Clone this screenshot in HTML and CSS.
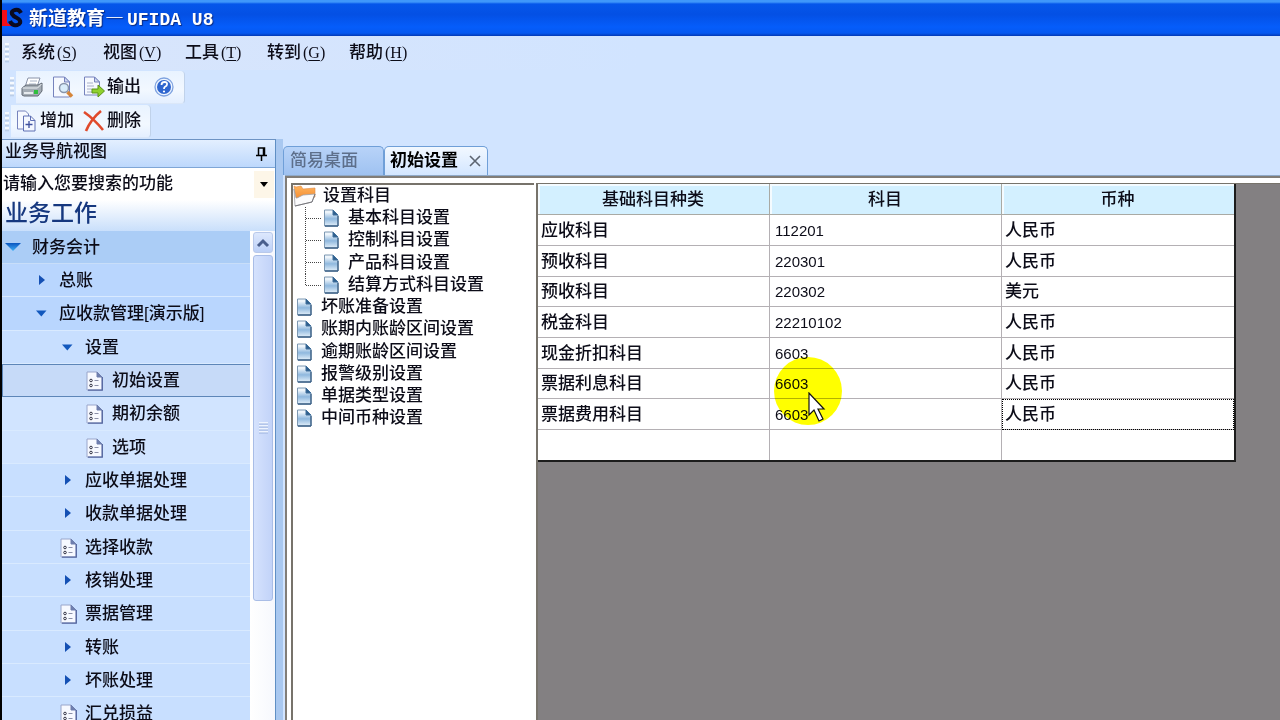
FILE: index.html
```
<!DOCTYPE html>
<html lang="zh-CN">
<head>
<meta charset="utf-8">
<title>新道教育—UFIDA U8</title>
<link rel="stylesheet" href="styles.css">
</head>
<body>
<svg class="defs" width="0" height="0" aria-hidden="true">
  <defs>
    <linearGradient id="g-page" x1="0" y1="0" x2="0" y2="1"><stop offset="0.15" stop-color="#eef5fb"/><stop offset="0.55" stop-color="#8fb8de"/><stop offset="1" stop-color="#e4f0fa"/></linearGradient>
    <linearGradient id="g-fold" x1="0" y1="0" x2="0" y2="1"><stop offset="0" stop-color="#ffb45c"/><stop offset="1" stop-color="#ef7f25"/></linearGradient>
    <linearGradient id="g-tri" x1="0" y1="0" x2="0" y2="1"><stop offset="0" stop-color="#0a55c0"/><stop offset="1" stop-color="#3fb0f5"/></linearGradient>
    <symbol id="page" viewBox="0 0 16 18">
      <path d="M1.500 1h8.500l5 5v11H1.500z" fill="url(#g-page)" stroke="#7d98b2"/>
      <path d="M10 1v5h5z" fill="#2f5f8c" stroke="#3f6f9c"/>
      <path d="M2 17h13M15 7v10" fill="none" stroke="#3c6187" stroke-width="1.300"/>
    </symbol>
    <symbol id="form" viewBox="0 0 17 20">
      <path d="M1 1h10l5 5v13H1z" fill="#f7f9ff" stroke="#9aa6cb"/>
      <path d="M11 1v5h5z" fill="#6f7fae" stroke="#6f7fae"/>
      <path d="M2 19.200h14.300V6" fill="none" stroke="#5567a0" stroke-width="1.300"/>
      <circle cx="5" cy="9.500" r="1.300" fill="none" stroke="#334"/><circle cx="5" cy="14.500" r="1.300" fill="none" stroke="#334"/>
      <path d="M8.500 9.500h4M8.500 14.500h4" stroke="#8a8fa8"/>
    </symbol>
    <symbol id="folder" viewBox="0 0 24 22">
      <path d="M1 1l2 1 5-1 2 3 12-1v9L3 18z" fill="url(#g-fold)" stroke="#e08a45" stroke-width="0.600"/>
      <path d="M4 13l6-3 12-1-3 8L2 21 1 4l2 9z" fill="#fbfbfc" stroke="#a0a0a4" stroke-width="0.800"/>
      <path d="M2 21l17-4 3-8" fill="none" stroke="#77777c"/>
    </symbol>
    <symbol id="branch" viewBox="0 0 18 23">
      <path d="M0.500 0v23M1 11.500h16" fill="none" stroke="#444" stroke-dasharray="1 1"/>
    </symbol>
    <symbol id="branch-end" viewBox="0 0 18 23">
      <path d="M0.500 0v11M1 11.500h16" fill="none" stroke="#444" stroke-dasharray="1 1"/>
    </symbol>
    <symbol id="right" viewBox="0 0 14 14"><path d="M5 1l6 5-6 5z" fill="#1450b4"/></symbol>
    <symbol id="down" viewBox="0 0 14 14"><path d="M2 3.500h10.500l-5.200 6z" fill="#1258bd"/></symbol>
  </defs>
</svg>

<header class="titlebar">
  <svg class="logo" width="22" height="22" viewBox="0 0 22 22" aria-hidden="true">
    <path d="M0 3h5v11q0 4 6 3v2H0z" fill="#f20d18"/>
    <path d="M19 6q-2-4-6-3-4 1-3 4 1 2 5 4 4 2 3 5-2 3-6 2-3-1-4-4" fill="none" stroke="#0a0a20" stroke-width="4"/>
  </svg>
  <h1>新道教育—<span class="mono">UFIDA U8</span></h1>
</header>

<nav class="menubar" aria-label="菜单">
  <i class="grip"></i>
  <button type="button">系统<span class="key">(<u>S</u>)</span></button>
  <button type="button">视图<span class="key">(<u>V</u>)</span></button>
  <button type="button">工具<span class="key">(<u>T</u>)</span></button>
  <button type="button">转到<span class="key">(<u>G</u>)</span></button>
  <button type="button">帮助<span class="key">(<u>H</u>)</span></button>
</nav>

<div class="toolbar main-tools">
  <i class="grip"></i>
  <div class="tools">
    <button type="button" aria-label="打印"><svg width="22" height="22" viewBox="0 0 22 22">
      <path d="M7 2h12l-3 9H4z" fill="#fff" stroke="#8a93a8"/><path d="M9 5h7M8 8h7" stroke="#a9b4c8"/>
      <path d="M1 12l4-3h12l4-2v8l-4 5H3l-2-1z" fill="#a4acb4" stroke="#626a75"/><path d="M1.500 12h15l4-4" fill="none" stroke="#eef2f5"/>
      <path d="M3 16h9v2H3z" fill="#e7ebee"/><path d="M13 14h4v4h-4z" fill="#2fbf3d"/></svg></button>
    <button type="button" aria-label="预览"><svg width="22" height="22" viewBox="0 0 22 22">
      <path d="M1.500 1h11l5 5v15h-16z" fill="#f6f9ff" stroke="#7683bd"/><path d="M12.500 1v5h5z" fill="#cfd8f0" stroke="#7683bd"/>
      <circle cx="12" cy="12" r="4.500" fill="#d9edfb" stroke="#8996ac" stroke-width="1.500"/><path d="M15.500 16l4.500 4.500" stroke="#d5853a" stroke-width="3.500"/></svg></button>
    <button type="button"><svg width="22" height="22" viewBox="0 0 22 22">
      <path d="M1.500 1h10l5 5v13h-15z" fill="#f6f9ff" stroke="#7683bd"/><path d="M11.500 1v5h5z" fill="#cfd8f0" stroke="#7683bd"/><path d="M4 7h6M4 10h7M4 13h5M4 16h5" stroke="#a8b0c8"/>
      <path d="M9 13h6V9l6.500 6-6.500 6v-4H9z" fill="#8fd12e" stroke="#5a9317"/></svg>输出</button>
    <button type="button" class="help" aria-label="帮助"><svg width="22" height="22" viewBox="0 0 22 22">
      <circle cx="11" cy="11" r="9" fill="#eef5ff" stroke="#7fa3e0" stroke-width="1.300"/><circle cx="11" cy="11" r="7" fill="#2f66cf"/>
      <path d="M8.500 9q0-3 3-3t2.500 2.500q0 1.300-2 2.300-1 .6-1 2.200" fill="none" stroke="#fff" stroke-width="1.800"/><circle cx="11" cy="15.500" r="1.100" fill="#fff"/></svg></button>
  </div>
</div>

<div class="toolbar edit-tools">
  <i class="grip"></i>
  <div class="tools">
    <button type="button"><svg width="22" height="22" viewBox="0 0 22 22">
      <path d="M1.500 1h8l3 3v15h-11z" fill="#f6f9ff" stroke="#7683bd"/><path d="M7.500 6h7l4.500 4.500V21H7.500z" fill="#f3f7ff" stroke="#5f70b4"/><path d="M14.500 6v4.500H19" fill="none" stroke="#5f70b4"/><path d="M13 11v7M9.500 14.500h7" stroke="#3d4f9e" stroke-width="1.300"/></svg>增加</button>
    <button type="button"><svg width="22" height="22" viewBox="0 0 22 22"><path d="M1 2Q11 9 20 20M18 1Q8 9 3 21" fill="none" stroke="#e04a2c" stroke-width="2.600"/></svg>删除</button>
  </div>
</div>

<main class="body">
  <aside class="sidebar">
    <div class="side-head"><h2>业务导航视图</h2>
      <button type="button" aria-label="固定"><svg width="14" height="16" viewBox="0 0 14 16"><path d="M3.500 9V2h6v7M8.500 2v7M1 9.500h11M6.500 10v5" fill="none" stroke="#000" stroke-width="1.500"/></svg></button>
    </div>
    <div class="search">
      <input type="text" aria-label="搜索功能" value="请输入您要搜索的功能">
      <button type="button" aria-label="展开"><svg width="8" height="5" viewBox="0 0 8 5"><path d="M0 0h8L4 5z"/></svg></button>
    </div>
    <h2 class="side-title">业务工作</h2>
    <div class="side-body">
      <ul class="nav">
        <li class="root"><svg width="18" height="18" viewBox="0 0 18 18"><path d="M1 4h16l-8 8z" fill="url(#g-tri)"/></svg>财务会计</li>
        <li class="l1 deep"><svg width="14" height="14"><use href="#right"/></svg>总账</li>
        <li class="l1 deep"><svg width="14" height="14"><use href="#down"/></svg>应收款管理[演示版]</li>
        <li class="l2"><svg width="14" height="14"><use href="#down"/></svg>设置</li>
        <li class="l3 active"><svg width="17" height="20"><use href="#form"/></svg>初始设置</li>
        <li class="l3"><svg width="17" height="20"><use href="#form"/></svg>期初余额</li>
        <li class="l3"><svg width="17" height="20"><use href="#form"/></svg>选项</li>
        <li class="l2"><svg width="14" height="14"><use href="#right"/></svg>应收单据处理</li>
        <li class="l2"><svg width="14" height="14"><use href="#right"/></svg>收款单据处理</li>
        <li class="l2"><svg width="17" height="20"><use href="#form"/></svg>选择收款</li>
        <li class="l2"><svg width="14" height="14"><use href="#right"/></svg>核销处理</li>
        <li class="l2"><svg width="17" height="20"><use href="#form"/></svg>票据管理</li>
        <li class="l2"><svg width="14" height="14"><use href="#right"/></svg>转账</li>
        <li class="l2"><svg width="14" height="14"><use href="#right"/></svg>坏账处理</li>
        <li class="l2"><svg width="17" height="20"><use href="#form"/></svg>汇兑损益</li>
      </ul>
      <div class="scroll">
        <button type="button" class="up" aria-label="向上滚动"><svg width="14" height="10" viewBox="0 0 14 10"><path d="M2 8l5-5 5 5" fill="none" stroke="#4a5f8c" stroke-width="3"/></svg></button>
        <div class="thumb"><i></i></div>
      </div>
    </div>
  </aside>

  <section class="work">
    <div class="tabs" role="tablist">
      <button type="button" role="tab" class="tab">简易桌面</button>
      <button type="button" role="tab" class="tab on" aria-selected="true">初始设置<svg width="12" height="12" viewBox="0 0 12 12"><path d="M1 1l10 10M11 1L1 11" stroke="#5c6470" stroke-width="1.600"/></svg></button>
    </div>
    <div class="frame">
      <ul class="tree">
        <li class="top"><svg width="24" height="22"><use href="#folder"/></svg>设置科目</li>
        <li class="kid"><svg class="br" width="18" height="23"><use href="#branch"/></svg><svg width="16" height="18"><use href="#page"/></svg>基本科目设置</li>
        <li class="kid"><svg class="br" width="18" height="23"><use href="#branch"/></svg><svg width="16" height="18"><use href="#page"/></svg>控制科目设置</li>
        <li class="kid"><svg class="br" width="18" height="23"><use href="#branch"/></svg><svg width="16" height="18"><use href="#page"/></svg>产品科目设置</li>
        <li class="kid"><svg class="br" width="18" height="23"><use href="#branch-end"/></svg><svg width="16" height="18"><use href="#page"/></svg>结算方式科目设置</li>
        <li><svg width="16" height="18"><use href="#page"/></svg>坏账准备设置</li>
        <li><svg width="16" height="18"><use href="#page"/></svg>账期内账龄区间设置</li>
        <li><svg width="16" height="18"><use href="#page"/></svg>逾期账龄区间设置</li>
        <li><svg width="16" height="18"><use href="#page"/></svg>报警级别设置</li>
        <li><svg width="16" height="18"><use href="#page"/></svg>单据类型设置</li>
        <li><svg width="16" height="18"><use href="#page"/></svg>中间币种设置</li>
      </ul>
      <div class="grid">
        <table>
          <thead><tr><th>基础科目种类</th><th>科目</th><th>币种</th></tr></thead>
          <tbody>
            <tr><td>应收科目</td><td>112201</td><td>人民币</td></tr>
            <tr><td>预收科目</td><td>220301</td><td>人民币</td></tr>
            <tr><td>预收科目</td><td>220302</td><td>美元</td></tr>
            <tr><td>税金科目</td><td>22210102</td><td>人民币</td></tr>
            <tr><td>现金折扣科目</td><td>6603</td><td>人民币</td></tr>
            <tr><td>票据利息科目</td><td>6603</td><td>人民币</td></tr>
            <tr><td>票据费用科目</td><td>6603</td><td class="focus">人民币</td></tr>
            <tr><td></td><td></td><td></td></tr>
          </tbody>
        </table>
        <i class="halo"></i>
        <svg class="pointer" width="20" height="32" viewBox="0 0 20 32" aria-hidden="true"><path d="M1 1v22l5-5 5 11 4-2-5-10h6z" fill="#fff" stroke="#111" stroke-width="1.200"/></svg>
      </div>
    </div>
  </section>
</main>
</body>
</html>
```
FILE: styles.css
```
* { box-sizing: border-box; }

body {
  margin: 0;
  height: 100vh;
  overflow: hidden;
  display: flex;
  flex-direction: column;
  border-left: 2px solid #000;
  background: #d1e4ff;
  color: #0c0c18;
  font: 500 17px/22px "Liberation Sans", "Noto Sans CJK SC", sans-serif;
  white-space: nowrap;
}

h1, h2, ul { margin: 0; padding: 0; font-weight: 500; }
ul { list-style: none; }
svg { display: block; flex: none; }
.defs { position: absolute; }

button {
  margin: 0;
  padding: 0;
  border: 0;
  background: none;
  color: inherit;
  font: inherit;
}

/* Title bar */
.titlebar {
  flex: none;
  height: 36px;
  display: flex;
  align-items: center;
  gap: 5px;
  background: linear-gradient(#3f97fa 0, #3f97fa 2px, #0556ea 4px, #0450e4 40%, #055dfb 75%, #0558f0 92%, #0339b4);
}
.titlebar h1 {
  color: #fff;
  font: bold 19px/26px "Noto Sans CJK SC", sans-serif;
  text-shadow: 1px 1px 1px #0b2a80;
}
.titlebar .mono { margin-left: 3px; font-family: "Liberation Mono", monospace; font-size: 18px; }

/* Menu and tool bars */
.grip {
  flex: none;
  width: 4px;
  height: 20px;
  background: repeating-linear-gradient(#f6faff 0, #f6faff 2px, #b4c7e2 3px, #d1e4ff 5px);
}
.menubar {
  flex: none;
  height: 34px;
  display: flex;
  align-items: center;
  padding-left: 3px;
  background: linear-gradient(90deg, #d9e5fb, #d1e4ff 50%);
}
.menubar button {
  width: 82px;
  display: flex;
  align-items: center;
  text-align: left;
}
.menubar .grip { margin-right: 12px; }
.key { margin-left: 2px; font: 16px/20px "Liberation Serif", serif; }
.key u { text-underline-offset: 2px; }

.toolbar {
  flex: none;
  height: 34px;
  display: flex;
  align-items: center;
  gap: 2px;
}
.main-tools { padding-left: 8px; }
.edit-tools { padding-left: 3px; height: 35px; }
.tools {
  height: 33px;
  display: flex;
  align-items: center;
  gap: 9px;
  padding: 0 9px 0 5px;
  border-right: 1px solid #c0d2ea;
  border-bottom: 1px solid #dbe7f8;
  border-radius: 0 4px 4px 0;
  background: linear-gradient(#e9f3ff, #f2f8ff 60%, #e4efff);
}
.tools button { display: flex; align-items: center; gap: 2px; }
.tools .help { margin-left: 3px; }

/* Main split */
.body { flex: 1; min-height: 0; display: flex; gap: 7px; background: linear-gradient(90deg, #a9c8f0, #a9c8f0 281px, #d1e4ff 281px); }

.sidebar {
  flex: none;
  width: 274px;
  display: flex;
  flex-direction: column;
  border-top: 1px solid #6d93c4;
  border-right: 1px solid #5f8fc4;
  background: #fff;
}
.side-head {
  flex: none;
  height: 28px;
  display: flex;
  align-items: center;
  justify-content: space-between;
  padding: 0 6px 4px 3px;
  border-bottom: 1px solid #7fa6d6;
  background: linear-gradient(#e3efff, #bdd8fc);
}
.side-head h2 { font-size: 17px; }
.side-head button { padding-top: 4px; }
.search { flex: none; height: 32px; display: flex; align-items: center; padding-right: 1px; }
.search input {
  flex: 1;
  min-width: 0;
  padding: 0 1px;
  border: 0;
  background: none;
  color: inherit;
  font: inherit;
}
.search button { width: 20px; height: 27px; display: grid; place-items: center; background: #fdf6e8; }
.side-title {
  flex: none;
  height: 31px;
  padding-left: 3px;
  color: #16387f;
  font-size: 23px;
  line-height: 26px;
  background: linear-gradient(#fff, #c9dffb);
}
.side-body { flex: 1; min-height: 0; display: flex; }

.nav { flex: 1; overflow: hidden; background: #c8dfff; }
.nav li {
  height: 33px;
  display: flex;
  align-items: center;
  gap: 10px;
  padding-top: 1px;
  border-bottom: 1px solid #d9eaff;
}
.nav li:nth-child(3n) { height: 34px; }
.nav .root { padding-left: 2px; background: #abcdf6; border-bottom-color: #c8def9; }
.nav .deep { background: #b9d6fe; }
.nav .l1 { padding-left: 32px; gap: 11px; }
.nav .l2 { padding-left: 58px; gap: 11px; }
.nav .l2 svg[height="20"] { margin-right: -3px; }
.nav .l3 { padding-left: 84px; gap: 9px; background: #d1e4ff; }
.nav .active { padding-left: 83px; background: #c6daf8; border: solid #5d86b8; border-width: 1px 0 1px 1px; }

.scroll { flex: none; width: 25px; padding: 1px 2px 0 3px; background: linear-gradient(90deg, #fff, #f6f8fd); }
.scroll .up {
  width: 100%;
  height: 21px;
  display: grid;
  place-items: center;
  border: 1px solid #b9c9ea;
  border-radius: 3px;
  background: linear-gradient(#dde8fd, #bcd0f7);
}
.scroll .thumb {
  height: 346px;
  margin-top: 2px;
  display: grid;
  place-items: center;
  border: 1px solid #a9bde6;
  border-radius: 3px;
  background: linear-gradient(90deg, #d5e2fd, #c2d3f8);
}
.scroll .thumb i { width: 9px; height: 12px; background: repeating-linear-gradient(#eef4ff 0, #eef4ff 1px, #9db4e0 2px, #c8d7f8 3px); }

/* Workspace */
.work { flex: 1; min-width: 0; display: flex; flex-direction: column; }
.tabs { flex: none; height: 36px; display: flex; align-items: flex-end; }
.tab {
  height: 29px;
  width: 101px;
  padding: 0 6px;
  border: 1px solid #6f9fd8;
  border-bottom: 0;
  border-radius: 5px 5px 0 0;
  background: linear-gradient(#b8d3f8, #9fc2f1);
  color: #5d6f8b;
  text-align: left;
}
.tab.on {
  width: 104px;
  padding-left: 5px;
  display: flex;
  align-items: center;
  justify-content: space-between;
  background: linear-gradient(#f2f8ff, #d3e6ff);
  color: #000;
  font-weight: bold;
}
.frame {
  flex: 1;
  min-height: 0;
  margin-left: 2px;
  display: flex;
  gap: 2px;
  padding: 5px 0 0 4px;
  border: solid #817d78;
  border-width: 2px 0 0 2px;
  box-shadow: 0 -1px #8fa9c8;
  margin-top: 1px;
  background: #fff;
}
.tree {
  flex: none;
  width: 243px;
  overflow: hidden;
  border: solid #77736b;
  border-width: 2px 0 0 2px;
}
.tree li { height: 22px; display: flex; align-items: center; gap: 9px; padding-left: 3px; }
.tree li:nth-child(4n) { height: 23px; }
.tree .top { padding-left: 0; gap: 6px; }
.tree .kid { padding-left: 12px; }
.tree .br { margin-right: -9px; }

.grid {
  position: relative;
  flex: 1;
  min-width: 0;
  overflow: hidden;
  border: solid #77736b;
  border-width: 1px 0 0 2px;
  background: #838082;
}
table {
  width: 698px;
  border-collapse: separate;
  border-spacing: 0;
  table-layout: fixed;
  border: solid #1c1c1c;
  border-width: 0 2px 2px 0;
  background: #fff;
}
tr { height: 31px; }
tbody tr:nth-child(3n), tbody tr:last-child { height: 30px; }
th, td {
  padding: 1px 4px 0 3px;
  border: solid #b4b0b4;
  border-width: 0 1px 1px 0;
  font-weight: 500;
  text-align: left;
}
td:nth-child(2) { padding-left: 5px; font-size: 15px; }
th:last-child, td:last-child { border-right: 0; }
tbody tr:last-child td { border-bottom: 0; }
th { text-align: center; background: #d3f0ff; border-color: #a9aaa4; box-shadow: inset 2px 2px #f4fbff; }
.focus { outline: 1px dotted #000; outline-offset: -1px; }

/* Mouse pointer with its highlight */
.halo {
  position: absolute;
  left: 236px;
  top: 173px;
  width: 68px;
  height: 68px;
  border-radius: 50%;
  background: #ffff00;
  mix-blend-mode: multiply;
}
.pointer { position: absolute; left: 270px; top: 208px; }
```
